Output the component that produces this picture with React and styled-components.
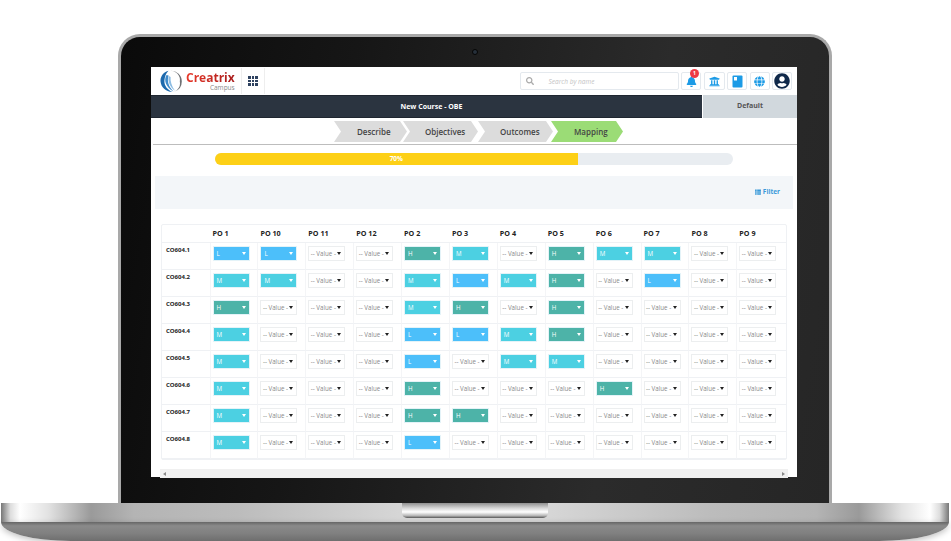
import React from 'react';
import styled, { createGlobalStyle } from 'styled-components';
import { FaBell, FaUniversity, FaGlobe, FaUserCircle, FaSearch, FaThList } from 'react-icons/fa';

const GlobalStyle = createGlobalStyle`
  html, body {
    margin: 0;
    padding: 0;
    background: #fff;
    font-family: 'Open Sans', 'Liberation Sans', sans-serif;
    overflow: hidden;
  }
  * { box-sizing: border-box; }
`;

const Page = styled.div`
  width: 951px;
  height: 541px;
  padding-top: 34px;
  overflow: hidden;
`;

const Lid = styled.div`
  position: relative;
  width: 714px;
  height: 469px;
  margin-left: 118px;
  padding: 30px 30px 0;
  border: 3px solid #a9a9a9;
  border-bottom: 0;
  border-radius: 22px 22px 0 0;
  background: linear-gradient(100deg, #0a0a0a 0%, #161616 30%, #2b2b2b 70%, #262626 100%);
`;

const Camera = styled.span`
  position: absolute;
  top: 12px;
  left: 351px;
  width: 6px;
  height: 6px;
  border-radius: 50%;
  background: #26303a;
  border: 1px solid #050505;
`;

const Screen = styled.div`
  width: 646px;
  height: 410px;
  background: #fff;
  display: flex;
  flex-direction: column;
  & > * { flex: none; }
`;

const Header = styled.div`
  height: 28px;
  display: flex;
  align-items: center;
`;

const LogoBox = styled.div`
  width: 90px;
  height: 26px;
  display: flex;
  align-items: center;
  padding-left: 9px;
  gap: 3px;
`;

const LogoWords = styled.div`
  display: flex;
  flex-direction: column;
  align-items: flex-end;
`;

const LogoName = styled.span`
  font-size: 12px;
  line-height: 13px;
  font-weight: 700;
  background: linear-gradient(90deg, #e8392a, #a81c1c);
  -webkit-background-clip: text;
  background-clip: text;
  color: transparent;
`;

const LogoSub = styled.span`
  font-size: 6.5px;
  line-height: 7px;
  color: #8a8a8a;
`;

const AppsButton = styled.div`
  width: 24px;
  height: 26px;
  border-left: 1px solid #eee;
  border-right: 1px solid #eee;
  display: grid;
  grid-template-columns: repeat(3, 2.4px);
  gap: 1.2px;
  align-content: center;
  justify-content: center;
`;

const AppsDot = styled.i`
  height: 2.4px;
  background: #2f4260;
`;

const Tools = styled.div`
  margin-left: auto;
  margin-right: 5px;
  display: flex;
  align-items: center;
  gap: 2.5px;
`;

const Search = styled.div`
  width: 159px;
  height: 18px;
  display: flex;
  align-items: center;
  gap: 15px;
  padding-left: 5px;
  border: 1px solid #e4e9ee;
  border-radius: 2px;
  font-size: 6.5px;
  font-style: italic;
  color: #c4c4c4;
`;

const ToolButton = styled.div`
  position: relative;
  width: ${p => p.$w || 20}px;
  height: 18px;
  display: flex;
  align-items: center;
  justify-content: center;
  border: 1px solid #e4e9ee;
  border-radius: 2px;
  color: ${p => p.$color || '#1c9be6'};
  font-size: 11px;
`;

const Badge = styled.span`
  position: absolute;
  top: -4px;
  right: 1px;
  width: 9px;
  height: 9px;
  border-radius: 50%;
  background: #ee3b45;
  color: #fff;
  font-size: 5px;
  font-weight: 700;
  line-height: 9px;
  text-align: center;
`;

const TitleBar = styled.div`
  height: 23px;
  display: flex;
`;

const Title = styled.div`
  flex: 1;
  background: #2b3440;
  border-top: 1px solid #1f2630;
  border-bottom: 1px solid #1f2630;
  color: #fff;
  font-size: 7px;
  font-weight: 700;
  line-height: 21px;
  text-align: center;
  padding-left: 10px;
`;

const DefaultTab = styled.div`
  width: 94px;
  margin-left: 1px;
  background: #d1d8dd;
  color: #555;
  font-size: 7px;
  font-weight: 700;
  line-height: 22px;
  text-align: center;
`;

const StepRow = styled.div`
  height: 27px;
  margin-left: 2px;
  padding: 3px 0 0 181px;
  display: flex;
  border-bottom: 1px solid #bdbdbd;
`;

const Step = styled.div`
  width: ${p => p.$w}px;
  height: 21px;
  margin-right: ${p => p.$gap || 0}px;
  padding-left: ${p => p.$pad}px;
  background: ${p => (p.$active ? '#9bdc76' : '#dcdcdc')};
  color: #444;
  font-size: 8px;
  font-weight: 600;
  line-height: 21px;
  clip-path: polygon(0 0, calc(100% - 7px) 0, 100% 50%, calc(100% - 7px) 100%, 0 100%, 7px 50%);
`;

const Progress = styled.div`
  width: 518px;
  height: 12px;
  margin: 8px 0 0 64px;
  background: #e9edf1;
  border-radius: 6px;
  overflow: hidden;
`;

const ProgressFill = styled.div`
  width: 70%;
  height: 100%;
  background: #fdd017;
  color: #fff;
  font-size: 6.5px;
  font-weight: 700;
  line-height: 12px;
  text-align: center;
`;

const FilterPanel = styled.div`
  width: 638px;
  height: 33px;
  margin: 11px 0 0 4px;
  background: #f3f6f9;
  display: flex;
  align-items: center;
  justify-content: flex-end;
  gap: 2px;
  padding: 0 13px 2px 0;
  color: #3a9ad9;
  font-size: 6.5px;
  font-weight: 700;
`;

const Grid = styled.div`
  width: 626px;
  margin: 15px 0 0 10px;
  display: grid;
  grid-template-columns: 47.5px repeat(11, 47.9px) 1fr;
  grid-template-rows: 18px repeat(8, 27px);
  border: 1px solid #eff1f4;
  border-radius: 2px;
`;

const HeadCell = styled.div`
  padding-left: 3px;
  font-size: 7.2px;
  font-weight: 700;
  line-height: 17px;
  color: #222;
  border-bottom: 1px solid #eff1f4;
`;

const Cell = styled.div`
  padding: 3px 0 0 2px;
  border-bottom: 1px solid #eff1f4;
  border-left: 1px solid #f4f5f7;
`;

const RowLabel = styled.div`
  padding: 2px 0 0 4px;
  font-size: 6px;
  font-weight: 700;
  line-height: 11px;
  color: #222;
  border-bottom: 1px solid #eff1f4;
`;

const levelColors = { L: '#4cbffa', M: '#4cd0e2', H: '#4db3a8' };

const Select = styled.div`
  width: 37px;
  height: 15px;
  display: flex;
  align-items: center;
  justify-content: space-between;
  padding: 0 3px 0 ${p => (p.$level ? 3 : 1.5)}px;
  border: 1px solid ${p => (p.$level ? '#e4f3f8' : '#eceeef')};
  background: ${p => (p.$level ? levelColors[p.$level] : '#fff')};
  color: ${p => (p.$level ? '#fff' : '#8a8a8a')};
  font-size: 6.2px;
  white-space: nowrap;
  overflow: hidden;
`;

const Arrow = styled.span`
  width: 0;
  height: 0;
  flex: none;
  border-left: 2px solid transparent;
  border-right: 2px solid transparent;
  border-top: 3px solid ${p => (p.$level ? '#fff' : '#222')};
`;

const Scrollbar = styled.div`
  width: 628px;
  height: 9px;
  margin: 9px 0 0 9px;
  padding: 0 3px;
  background: #f0f0f0;
  display: flex;
  align-items: center;
  justify-content: space-between;
`;

const ScrollArrow = styled.span`
  width: 0;
  height: 0;
  border-top: 2px solid transparent;
  border-bottom: 2px solid transparent;
  border-${p => (p.$right ? 'left' : 'right')}: 3px solid #888;
`;

const Base = styled.div`
  width: 948px;
  margin-left: 1px;
`;

const BaseTop = styled.div`
  height: 19px;
  background: linear-gradient(90deg, #777 0, #ddd 1%, #fff 2%, #e2e2e2 5%, #9a9a9a 9.5%, #b4b4b4 14%, #bcbcbc 25%, #d6d6d6 42%, #d6d6d6 58%, #bcbcbc 75%, #b4b4b4 86%, #9a9a9a 90.5%, #e2e2e2 95%, #fff 98%, #ddd 99%, #777 100%);
  display: flex;
  justify-content: center;
`;

const Notch = styled.div`
  width: 146px;
  height: 15px;
  border-radius: 0 0 5px 5px;
  background: linear-gradient(180deg, #8f8f8f 0, #d8d8d8 35%, #fff 60%, #b5b5b5 85%, #555 100%);
`;

const BaseBottom = styled.div`
  height: 19px;
  border-radius: 0 0 70px 70px / 0 0 19px 19px;
  background: linear-gradient(180deg, #666 0, #8a8a8a 20%, #808080 60%, #6e6e6e 100%);
  box-shadow: 0 2px 6px rgba(0, 0, 0, 0.25);
`;

const columns = ['PO 1', 'PO 10', 'PO 11', 'PO 12', 'PO 2', 'PO 3', 'PO 4', 'PO 5', 'PO 6', 'PO 7', 'PO 8', 'PO 9'];

const rows = [
  ['CO604.1', 'LL--HM-HMM--'],
  ['CO604.2', 'MM--MLMH-L--'],
  ['CO604.3', 'H---MH-H----'],
  ['CO604.4', 'M---LLMH----'],
  ['CO604.5', 'M---L-MM----'],
  ['CO604.6', 'M---H---H---'],
  ['CO604.7', 'M---HH------'],
  ['CO604.8', 'M---L-------'],
];

const steps = [
  { label: 'Describe', w: 73, pad: 23, gap: -4 },
  { label: 'Objectives', w: 75, pad: 22, gap: 0 },
  { label: 'Outcomes', w: 75, pad: 22, gap: -2 },
  { label: 'Mapping', w: 72, pad: 23, active: true },
];

const Logo = () => (
  <svg width="23" height="23" viewBox="0 0 23 23" style={{ flex: 'none' }}>
    <path d="M8.5 .8 C2.5 2.5 0 7.5 .6 12 C1.2 17 5.5 21.8 12.5 22 C7.5 20 4 15.5 4.4 10.5 C4.7 6.5 6 3.5 8.5 .8Z" fill="#1c69ad" />
    <path d="M6.5 5 C3.6 10 5.5 17 13.5 21.5 C8.5 16.5 6.8 11 8.6 5.5Z" fill="#3f8bcb" />
    <path d="M8.8 6 C7.6 11 9.4 16.5 15 20.8 C11.5 16 10.2 11 10.6 7Z" fill="#8dbde3" />
    <path d="M10 .8 A10.6 10.6 0 0 1 21.8 11.5 A10.6 10.6 0 0 1 14.5 21.6 A9 9 0 0 0 19.8 11.5 A9.2 9.2 0 0 0 10 .8Z" fill="#6f7174" />
  </svg>
);

const BookIcon = () => (
  <svg width="11" height="13" viewBox="0 0 11 13">
    <rect x="0.5" y="0.5" width="10" height="12" rx="1" fill="#1c9be6" />
    <rect x="2" y="2" width="3" height="3.5" fill="#fff" />
  </svg>
);

const ValueSelect = ({ level }) => (
  <Select $level={level}>
    <span>{level || '-- Value -'}</span>
    <Arrow $level={level} />
  </Select>
);

export default function App() {
  return (
    <Page>
      <GlobalStyle />
      <Lid>
        <Camera />
        <Screen>
          <Header>
            <LogoBox>
              <Logo />
              <LogoWords>
                <LogoName>Creatrix</LogoName>
                <LogoSub>Campus</LogoSub>
              </LogoWords>
            </LogoBox>
            <AppsButton>
              {Array.from({ length: 9 }, (_, i) => <AppsDot key={i} />)}
            </AppsButton>
            <Tools>
              <Search>
                <FaSearch size={8} color="#aaa" />
                Search by name
              </Search>
              <ToolButton>
                <FaBell />
                <Badge>1</Badge>
              </ToolButton>
              <ToolButton $w={21}><FaUniversity /></ToolButton>
              <ToolButton><BookIcon /></ToolButton>
              <ToolButton><FaGlobe /></ToolButton>
              <ToolButton $color="#10294a"><FaUserCircle size={16} /></ToolButton>
            </Tools>
          </Header>
          <TitleBar>
            <Title>New Course - OBE</Title>
            <DefaultTab>Default</DefaultTab>
          </TitleBar>
          <StepRow>
            {steps.map(s => (
              <Step key={s.label} $w={s.w} $pad={s.pad} $gap={s.gap} $active={s.active}>{s.label}</Step>
            ))}
          </StepRow>
          <Progress><ProgressFill>70%</ProgressFill></Progress>
          <FilterPanel><FaThList size={6} /> Filter</FilterPanel>
          <Grid>
            <HeadCell />
            {columns.map(c => <HeadCell key={c}>{c}</HeadCell>)}
            {rows.map(([name, values]) => (
              <React.Fragment key={name}>
                <RowLabel>{name}</RowLabel>
                {values.split('').map((v, i) => (
                  <Cell key={i}><ValueSelect level={v === '-' ? null : v} /></Cell>
                ))}
              </React.Fragment>
            ))}
          </Grid>
          <Scrollbar><ScrollArrow /><ScrollArrow $right /></Scrollbar>
        </Screen>
      </Lid>
      <Base>
        <BaseTop><Notch /></BaseTop>
        <BaseBottom />
      </Base>
    </Page>
  );
}
